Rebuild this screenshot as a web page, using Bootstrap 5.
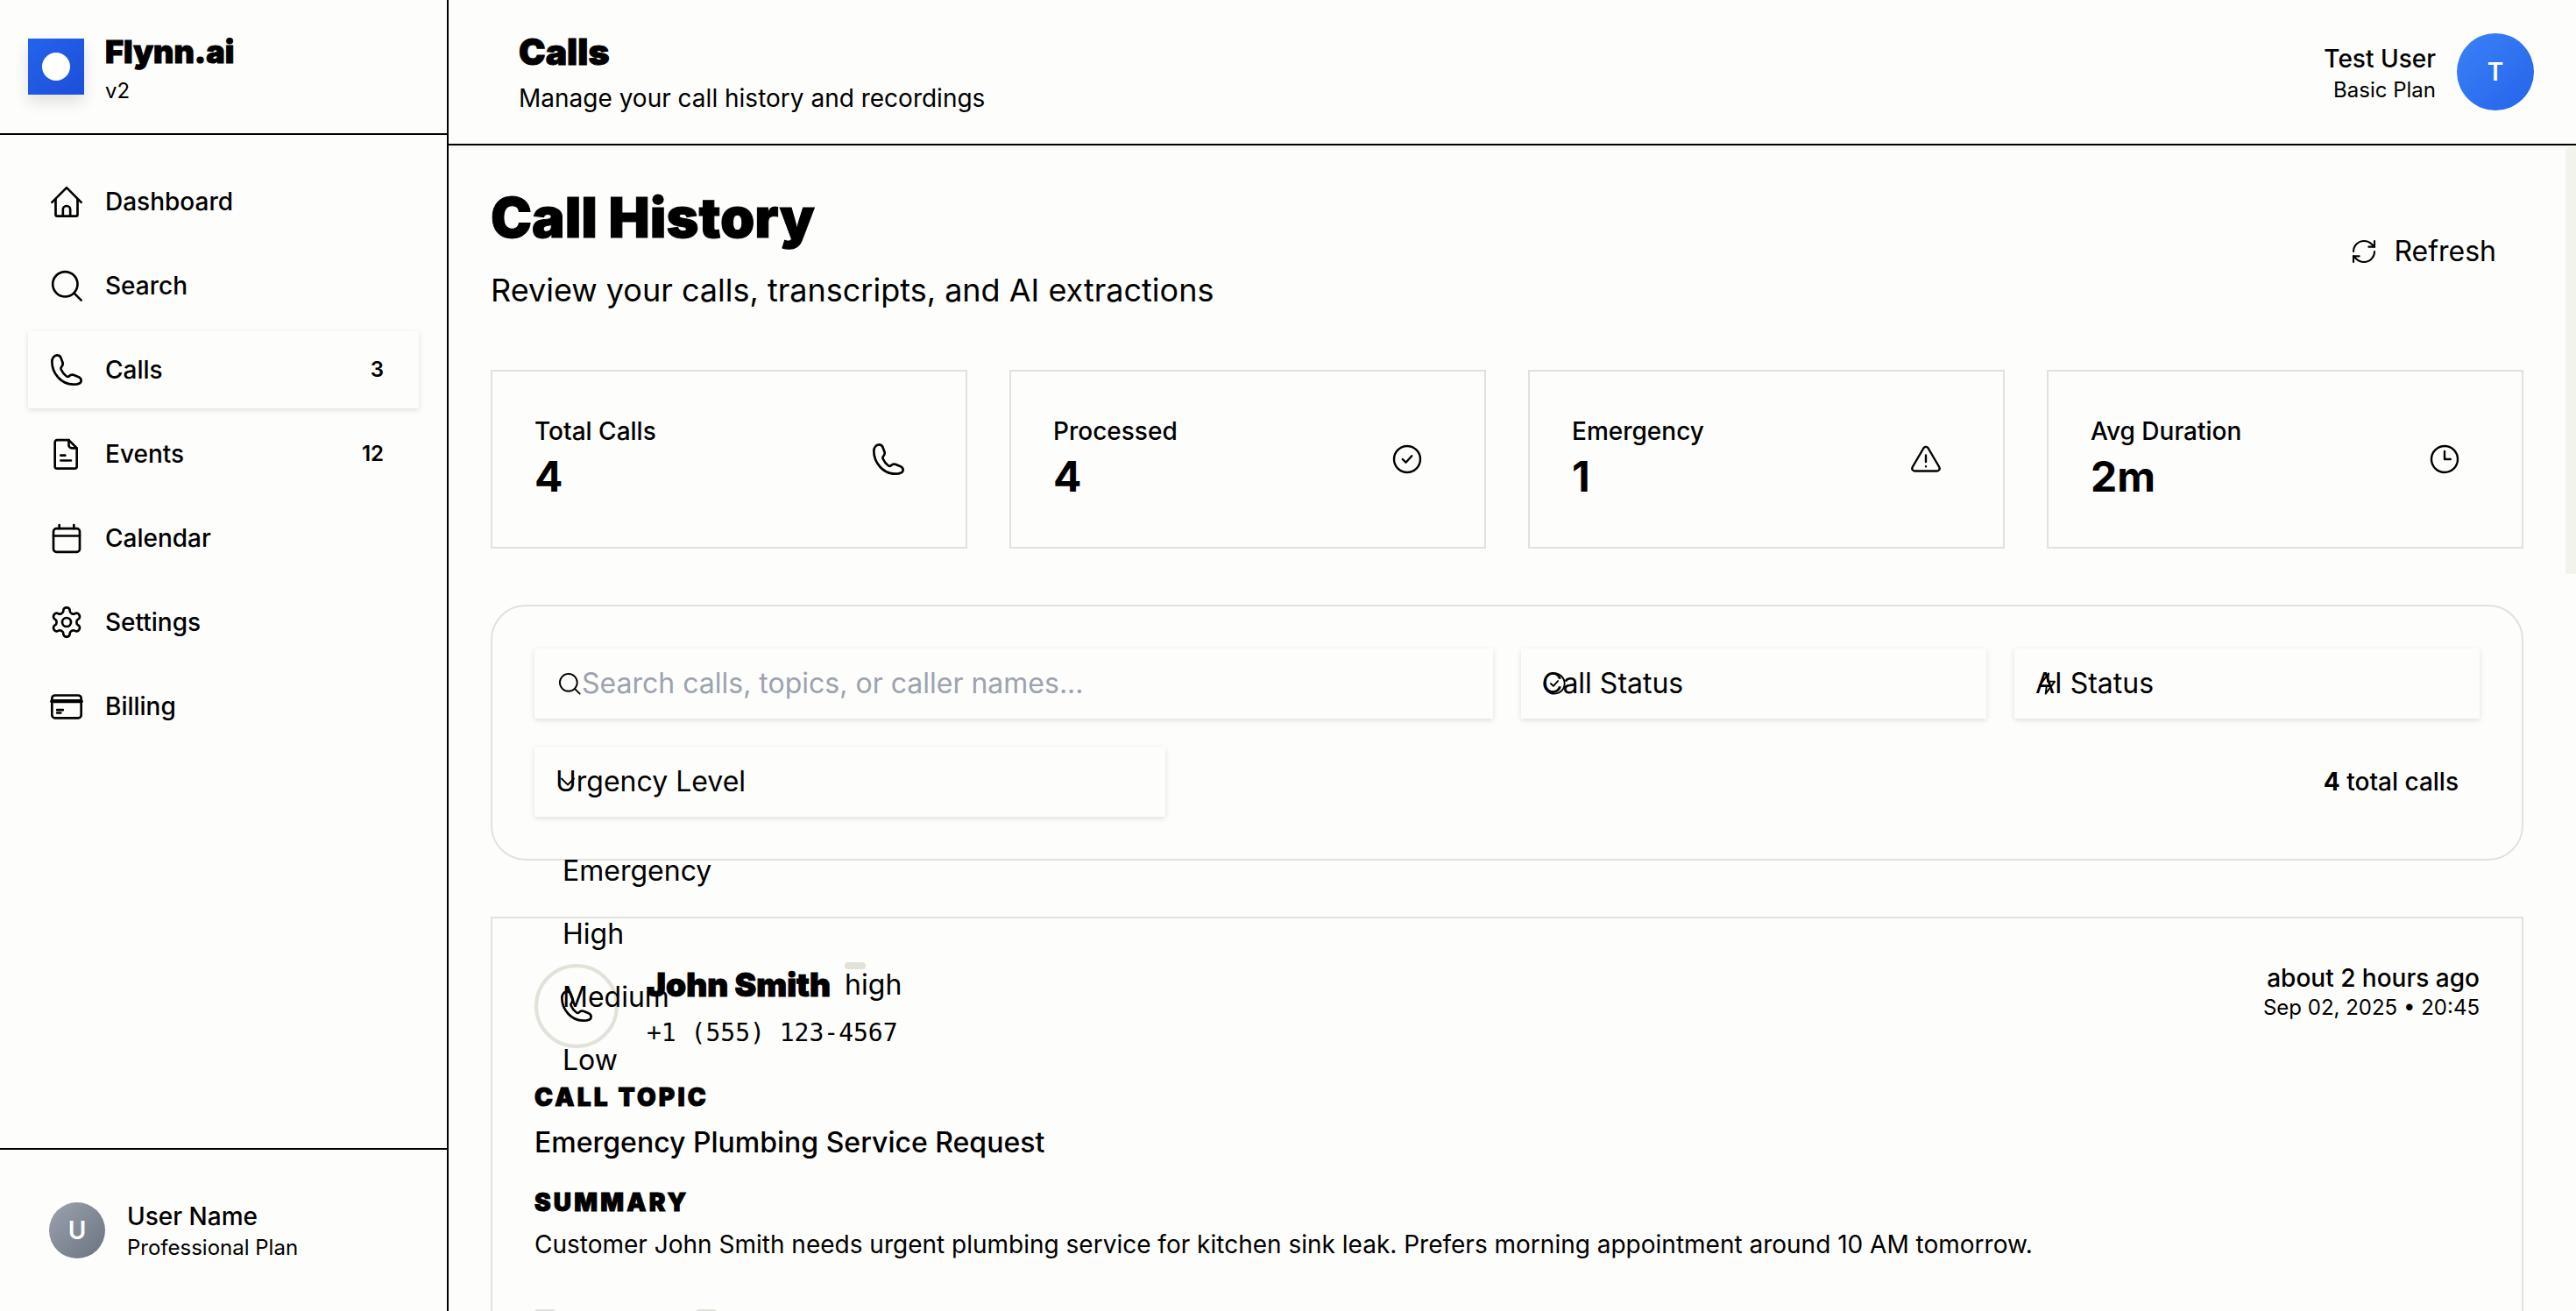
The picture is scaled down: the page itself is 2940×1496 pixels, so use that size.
<!doctype html>
<html lang="en"><head><meta charset="utf-8"><title>Flynn.ai Calls</title>
<link href="https://cdn.jsdelivr.net/npm/bootstrap@5.3.0/dist/css/bootstrap.min.css" rel="stylesheet">
<style>
html,body{height:100%;overflow:hidden}
body{background:#fdfdfb;color:#000;font-family:Inter,"Noto Sans",sans-serif;font-size:32px;line-height:1.5}
svg{display:block;fill:none;stroke:#000;stroke-width:1.6;stroke-linecap:round;stroke-linejoin:round;flex:none}
.heavy{font-family:Inter,"Liberation Sans",sans-serif;font-weight:900;-webkit-text-stroke:1px #000}
.shell{height:1496px}
.side{width:512px;border-right:2px solid #000;flex:none}
.brand{height:154px;border-bottom:2px solid #000;padding:44px 32px 0;gap:24px}
.logo{width:64px;height:64px;background:linear-gradient(135deg,#2563eb,#1d4ed8);box-shadow:0 8px 16px rgba(0,0,0,.12)}
.logo i{width:32px;height:32px;background:#fff;border-radius:50%}
.brand-name{font-size:36px;line-height:48px;margin-top:-9px}
.brand-ver{font-size:24px;line-height:32px;margin-top:5px}
.navs{padding:32px 32px 0;gap:8px}
.nav-row{height:88px;padding:0 40px 0 24px;gap:24px;color:#000;text-decoration:none;font-size:28px;font-weight:500}
.nav-row.on{background:#fdfdfb;box-shadow:0 2px 6px rgba(0,0,0,.12)}
.nav-count{font-size:24px;font-weight:600;margin-left:auto}
.foot{height:186px;border-top:2px solid #000;padding:0 56px;gap:25px}
.ava{border-radius:50%;color:#fff;font-weight:600}
.ava-u{width:64px;height:64px;background:linear-gradient(135deg,#9ca3af,#6b7280);font-size:28px}
.foot-n{font-size:28px;font-weight:500;line-height:36px}
.foot-p{font-size:24px;line-height:32px;margin-top:2px}
.foot-txt{padding-top:2px}
.top{height:166px;border-bottom:2px solid #000;padding:0 48px 0 80px;box-shadow:0 2px 6px rgba(0,0,0,.05);flex:none}
.top-t{font-size:41px;line-height:56px}
.top-s{font-size:28px;line-height:44px;margin-top:3px;margin-bottom:-1px}
.who-col{padding-top:4px}
.who{font-size:28px;font-weight:500;line-height:36px}
.plan{font-size:24px;line-height:32px;margin-top:2px}
.ava-t{width:88px;height:88px;background:linear-gradient(135deg,#3b82f6,#2563eb);font-size:28px;margin-left:24px}
.pane{padding:48px 60px 0 48px;overflow:hidden}
.page-t{font-size:63px;line-height:72px;margin:-2px 0 2px}
.page-s{font-size:36px;line-height:56px;margin-top:19px}
.refresh{font-size:32px;padding:0 31px 0 0;gap:18px;margin-top:45px;height:56px}
.stats{gap:48px;margin-top:63px}
.stat{flex:1 1 0;height:204px;border:2px solid #e2e2da;padding:0 48px 4px;background:#fdfdfb}
.stat-l{font-size:28px;font-weight:500;line-height:40px}
.stat-v{font-size:48px;font-weight:700;line-height:56px;margin-top:4px}
.stat-i{margin-right:22px;margin-top:4px}
.stat-ph{margin-right:20px}
.filters{border:2px solid #e2e2da;border-radius:40px;margin-top:64px;padding:48px;height:292px;gap:32px}
.field{height:80px;background:#fdfdfb;box-shadow:0 2px 6px rgba(0,0,0,.12);padding:0 24px;font-size:32px}
.f-search{width:1094px;padding-left:26px;gap:0}
.f-search span{color:#9ca3af}
.f-stat{width:531px}
.f-urg{width:720px}
.over{position:absolute;left:24px;top:50%;transform:translateY(-50%)}
.tot{font-size:28px;font-weight:500;padding-right:24px}
.tot b{font-weight:700}
.menu{position:absolute;left:642px;top:958px;font-size:32px;line-height:72px;z-index:3}
.call{border:2px solid #e2e2da;margin-top:64px;padding:48px;height:600px;position:relative}
.circ{width:96px;height:96px;border:4px solid #e2e2da;border-radius:50%;margin-right:32px;margin-top:4px}
.cname{font-size:37px;line-height:48px}
.pill{width:24px;height:8px;background:#e2e2da;border-radius:4px;position:absolute;top:0;left:0}
.sev{position:relative;font-size:32px;line-height:48px;margin-left:16px}
.sev .pill{top:-2px}
.head-col{padding-top:4px}
.tel{font-family:"DejaVu Sans Mono",monospace;font-size:28px;line-height:40px;margin-top:11px}
.when{text-align:right;padding-top:2px}
.when-a{font-size:28px;font-weight:500;line-height:36px}
.when-b{font-size:24px;line-height:32px}
.lab{font-size:28px;line-height:40px;letter-spacing:3.2px;text-transform:uppercase}
.lab-1{margin-top:33px}
.lab-2{margin-top:24px}
.topic{font-size:32px;font-weight:500;line-height:48px;margin-top:8px}
.sum{font-size:28px;line-height:44px;margin-top:6px}
.tag{width:24px;height:16px;background:#e2e2da;border-radius:4px 4px 0 0}
.tags{margin-top:52px;gap:160px}
.thumb{position:absolute;right:0;top:168px;width:12px;height:487px;background:#f3f3ee;border-top-left-radius:6px;z-index:4}
</style></head><body>
<div class="d-flex shell position-relative">
<aside class="side d-flex flex-column">
 <div class="brand d-flex align-items-start">
  <div class="logo d-flex align-items-center justify-content-center"><i></i></div>
  <div><div class="brand-name heavy">Flynn.ai</div><div class="brand-ver">v2</div></div>
 </div>
 <nav class="navs d-flex flex-column flex-grow-1">
  <a class="nav-row d-flex align-items-center" href="#"><svg width="40" height="40" viewBox="0 0 24 24"><path d="M2 12.500 12 2.500l10 10"/><path d="M4.500 10.500V21a1 1 0 0 0 1 1h13a1 1 0 0 0 1-1V10.500"/><path d="M9.500 22v-4.500a2.500 2.500 0 0 1 5 0V22"/></svg>Dashboard</a>
  <a class="nav-row d-flex align-items-center" href="#"><svg width="40" height="40" viewBox="0 0 24 24"><circle cx="11" cy="11" r="8.500"/><path d="m17.500 17.500 4.500 4.500"/></svg>Search</a>
  <a class="nav-row on d-flex align-items-center" href="#"><svg width="40" height="40" viewBox="0 0 24 24"><path d="M2 6.500C2 14.500 8.500 22 16.500 22c1.500 0 5.500 0 5.500-2.500 0-1.500-.8-2.300-2-2.700l-3.400-1.300c-1.200-.4-2.200.1-3 1-.5.4-1 .4-1.600 0-1.800-1.200-3-3-3.800-4.800-.3-.7-.2-1.200.3-1.700.7-.8 1.200-1.700.8-3L8 3.500C7.500 2.500 6.600 2 5.500 2 3.500 2 2 4 2 6.500z"/></svg>Calls<span class="nav-count">3</span></a>
  <a class="nav-row d-flex align-items-center" href="#"><svg width="40" height="40" viewBox="0 0 24 24"><path d="M5.500 2.500h8l5.500 5.500v12.500a1.500 1.500 0 0 1-1.500 1.500h-12A1.500 1.500 0 0 1 4 20.500v-16.500a1.500 1.500 0 0 1 1.500-1.500z"/><path d="M13.500 2.500V6a2 2 0 0 0 2 2H19"/><path d="M8 13h3M8 16.500h7"/></svg>Events<span class="nav-count">12</span></a>
  <a class="nav-row d-flex align-items-center" href="#"><svg width="40" height="40" viewBox="0 0 24 24"><rect x="3" y="5.500" width="18" height="16" rx="2"/><path d="M3 10.500h18M7 3v2.500M17 3v2.500"/></svg>Calendar</a>
  <a class="nav-row d-flex align-items-center" href="#"><svg width="40" height="40" viewBox="0 0 24 24"><path d="M12.220 2h-.44a2 2 0 0 0-2 2v.18a2 2 0 0 1-1 1.730l-.43.25a2 2 0 0 1-2 0l-.15-.08a2 2 0 0 0-2.730.73l-.22.38a2 2 0 0 0 .73 2.730l.15.1a2 2 0 0 1 1 1.720v.51a2 2 0 0 1-1 1.740l-.15.09a2 2 0 0 0-.73 2.730l.22.38a2 2 0 0 0 2.730.73l.15-.08a2 2 0 0 1 2 0l.43.25a2 2 0 0 1 1 1.730V20a2 2 0 0 0 2 2h.44a2 2 0 0 0 2-2v-.18a2 2 0 0 1 1-1.730l.43-.25a2 2 0 0 1 2 0l.15.08a2 2 0 0 0 2.730-.73l.22-.39a2 2 0 0 0-.73-2.730l-.15-.08a2 2 0 0 1-1-1.740v-.5a2 2 0 0 1 1-1.740l.15-.09a2 2 0 0 0 .73-2.730l-.22-.38a2 2 0 0 0-2.730-.73l-.15.08a2 2 0 0 1-2 0l-.43-.25a2 2 0 0 1-1-1.730V4a2 2 0 0 0-2-2z"/><circle cx="12" cy="12" r="3"/></svg>Settings</a>
  <a class="nav-row d-flex align-items-center" href="#"><svg width="40" height="40" viewBox="0 0 24 24"><rect x="2" y="4.500" width="20" height="15.500" rx="2"/><path d="M2 8.500h20" stroke-width="2.600"/><path d="M5.500 14.500h4M5.500 16.500h2.500"/></svg>Billing</a>
 </nav>
 <div class="foot d-flex align-items-center">
  <div class="ava ava-u d-flex align-items-center justify-content-center">U</div>
  <div class="foot-txt"><div class="foot-n">User Name</div><div class="foot-p">Professional Plan</div></div>
 </div>
</aside>
<div class="flex-grow-1 d-flex flex-column overflow-hidden">
 <header class="top d-flex align-items-center justify-content-between">
  <div><div class="top-t heavy">Calls</div><div class="top-s">Manage your call history and recordings</div></div>
  <div class="d-flex align-items-center text-end">
   <div class="who-col"><div class="who">Test User</div><div class="plan">Basic Plan</div></div>
   <div class="ava ava-t d-flex align-items-center justify-content-center">T</div>
  </div>
 </header>
 <main class="pane flex-grow-1">
  <div class="d-flex justify-content-between align-items-start">
   <div><h1 class="page-t heavy">Call History</h1><div class="page-s">Review your calls, transcripts, and AI extractions</div></div>
   <div class="refresh d-flex align-items-center"><svg width="32" height="32" viewBox="0 0 24 24"><path d="M3 12a9 9 0 0 1 9-9 9.750 9.750 0 0 1 6.740 2.740L21 8"/><path d="M21 3v5h-5"/><path d="M21 12a9 9 0 0 1-9 9 9.750 9.750 0 0 1-6.740-2.740L3 16"/><path d="M8 16H3v5"/></svg>Refresh</div>
  </div>
  <section class="stats d-flex">
   <div class="stat d-flex align-items-center justify-content-between"><div><div class="stat-l">Total Calls</div><div class="stat-v">4</div></div><svg class="stat-i stat-ph" width="40" height="40" viewBox="0 0 24 24"><path d="M2 6.500C2 14.500 8.500 22 16.500 22c1.500 0 5.500 0 5.500-2.500 0-1.500-.8-2.300-2-2.700l-3.400-1.300c-1.200-.4-2.200.1-3 1-.5.4-1 .4-1.600 0-1.800-1.200-3-3-3.800-4.800-.3-.7-.2-1.200.3-1.700.7-.8 1.200-1.700.8-3L8 3.500C7.500 2.500 6.600 2 5.500 2 3.500 2 2 4 2 6.500z"/></svg></div>
   <div class="stat d-flex align-items-center justify-content-between"><div><div class="stat-l">Processed</div><div class="stat-v">4</div></div><svg class="stat-i" width="36" height="36" viewBox="0 0 24 24"><circle cx="12" cy="12" r="10"/><path d="m8.500 12 2.500 2.500 4.500-5"/></svg></div>
   <div class="stat d-flex align-items-center justify-content-between"><div><div class="stat-l">Emergency</div><div class="stat-v">1</div></div><svg class="stat-i" width="36" height="36" viewBox="0 0 24 24"><path d="M10.300 3.500 1.800 18a2 2 0 0 0 1.700 3h17a2 2 0 0 0 1.700-3L13.700 3.500a2 2 0 0 0-3.400 0z"/><path d="M12 9v5M12 17.500v.01"/></svg></div>
   <div class="stat d-flex align-items-center justify-content-between"><div><div class="stat-l">Avg Duration</div><div class="stat-v">2m</div></div><svg class="stat-i" width="36" height="36" viewBox="0 0 24 24"><circle cx="12" cy="12" r="10"/><path d="M12 6v6h4.500"/></svg></div>
  </section>
  <section class="filters d-flex flex-wrap align-items-start">
   <div class="field f-search d-flex align-items-center"><svg width="28" height="28" viewBox="0 0 24 24"><circle cx="11" cy="11" r="8.500"/><path d="m17.500 17.500 4.500 4.500"/></svg><span>Search calls, topics, or caller names...</span></div>
   <div class="field f-stat d-flex align-items-center position-relative"><svg class="over" width="28" height="28" viewBox="0 0 24 24"><circle cx="12" cy="12" r="10"/><path d="m8.500 12 2.500 2.500 4.500-5"/></svg>Call Status</div>
   <div class="field f-stat d-flex align-items-center position-relative"><svg class="over" width="28" height="28" viewBox="0 0 24 24"><path d="M13 2 4 14h7l-1 8 9-12h-7z"/></svg>AI Status</div>
   <div class="field f-urg d-flex align-items-center position-relative"><svg class="over" width="28" height="28" viewBox="0 0 24 24"><path d="m6 9 6 6 6-6"/></svg>Urgency Level</div>
   <div class="tot ms-auto align-self-center"><b>4</b> total calls</div>
  </section>
  <div class="menu"><div>Emergency</div><div>High</div><div>Medium</div><div>Low</div></div>
  <article class="call">
   <div class="d-flex justify-content-between align-items-start">
    <div class="d-flex">
     <div class="circ d-flex align-items-center justify-content-center"><svg width="40" height="40" viewBox="0 0 24 24"><path d="M2 6.500C2 14.500 8.500 22 16.500 22c1.500 0 5.500 0 5.500-2.500 0-1.500-.8-2.300-2-2.700l-3.400-1.300c-1.200-.4-2.200.1-3 1-.5.4-1 .4-1.600 0-1.800-1.200-3-3-3.800-4.800-.3-.7-.2-1.200.3-1.700.7-.8 1.200-1.700.8-3L8 3.500C7.500 2.500 6.600 2 5.500 2 3.500 2 2 4 2 6.500z"/></svg></div>
     <div class="head-col"><div class="d-flex align-items-center"><span class="cname heavy">John Smith</span><span class="sev"><i class="pill"></i>high</span></div><div class="tel">+1 (555) 123-4567</div></div>
    </div>
    <div class="when"><div class="when-a">about 2 hours ago</div><div class="when-b">Sep 02, 2025 • 20:45</div></div>
   </div>
   <div class="lab heavy lab-1">Call Topic</div>
   <div class="topic">Emergency Plumbing Service Request</div>
   <div class="lab heavy lab-2">Summary</div>
   <div class="sum">Customer John Smith needs urgent plumbing service for kitchen sink leak. Prefers morning appointment around 10 AM tomorrow.</div>
   <div class="tags d-flex"><span class="tag"></span><span class="tag"></span></div>
  </article>
 </main>
</div>
<div class="thumb"></div>
</div>
</body></html>
